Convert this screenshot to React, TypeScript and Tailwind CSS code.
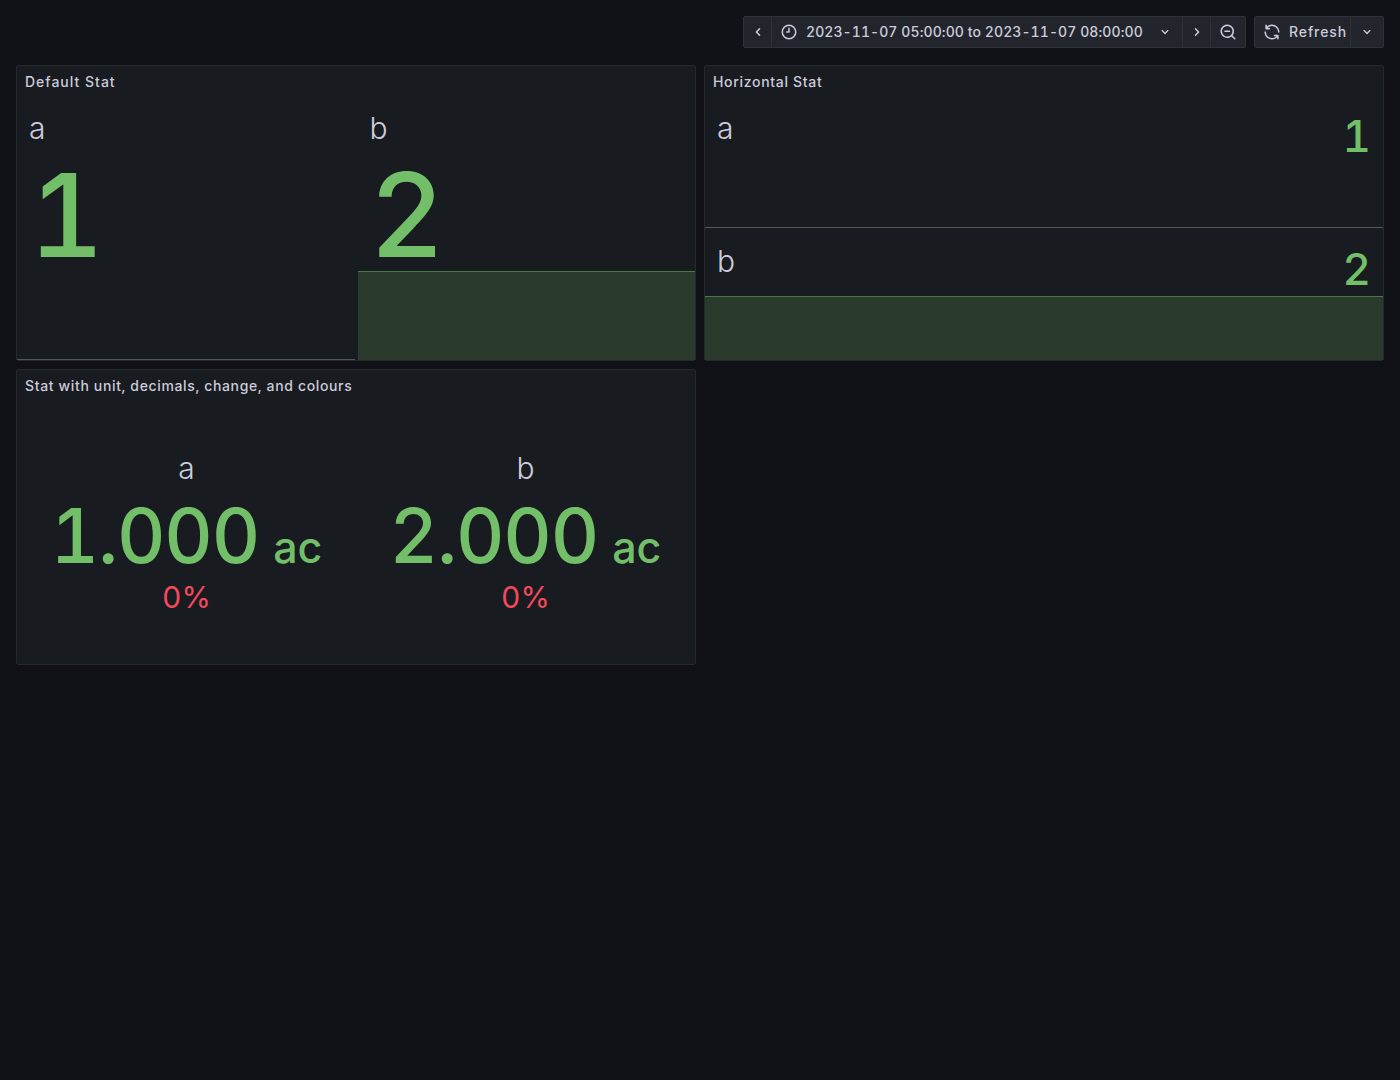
import React from "react"

const Panel: React.FC<{ title: string; titleClass: string; children: React.ReactNode }> = ({ title, titleClass, children }) => (
  <div className="flex h-[296px] flex-col rounded-[2px] border border-[#25282d] bg-[#181b1f]">
    <div className={`h-[32px] shrink-0 px-2 pt-[6px] text-sm leading-[20px] font-medium ${titleClass}`}>{title}</div>
    <div className="flex min-h-0 flex-1 flex-col">{children}</div>
  </div>
)

// flat sparkline: fill with a thin line on top
const Spark: React.FC<{ height: number }> = ({ height }) => (
  <svg className="absolute right-0 bottom-0 left-0 w-full" height={height} preserveAspectRatio="none" viewBox={`0 0 100 ${height}`}>
    <rect x="0" y="0" width="100" height={height} fill="#73bf69" fillOpacity="0.2" />
    <rect x="0" y="0" width="100" height="1" fill="#73bf69" fillOpacity="0.45" />
  </svg>
)

const Icon: React.FC<{ d: string; size?: number }> = ({ d, size = 16 }) => (
  <svg width={size} height={size} viewBox="0 0 24 24" fill="currentColor" className="shrink-0">
    <path d={d} />
  </svg>
)

const angleLeft = "M11.29,12l3.54-3.54a1,1,0,0,0,0-1.41,1,1,0,0,0-1.42,0L9.17,11.29a1,1,0,0,0,0,1.42L13.41,17a1,1,0,0,0,.71.29,1,1,0,0,0,.71-.29,1,1,0,0,0,0-1.41Z"
const angleRight = "M14.83,11.29,10.59,7.05a1,1,0,0,0-1.42,0,1,1,0,0,0,0,1.41L12.71,12,9.17,15.54a1,1,0,0,0,0,1.41,1,1,0,0,0,.71.29,1,1,0,0,0,.71-.29l4.24-4.24A1,1,0,0,0,14.83,11.29Z"
const angleDown = "M17,9.17a1,1,0,0,0-1.41,0L12,12.71,8.46,9.17a1,1,0,0,0-1.41,0,1,1,0,0,0,0,1.42l4.24,4.24a1,1,0,0,0,1.42,0L17,10.59A1,1,0,0,0,17,9.17Z"
const clock = "M12,2A10,10,0,1,0,22,12,10,10,0,0,0,12,2Zm0,18a8,8,0,1,1,8-8A8,8,0,0,1,12,20Zm0-14a1,1,0,0,0-1,1v4H9a1,1,0,0,0,0,2h3a1,1,0,0,0,1-1V7A1,1,0,0,0,12,6Z"
const searchMinus = "M21.71,20.29,18,16.61A9,9,0,1,0,16.61,18l3.68,3.68a1,1,0,0,0,1.42,0A1,1,0,0,0,21.71,20.29ZM11,18a7,7,0,1,1,7-7A7,7,0,0,1,11,18ZM14,10H8a1,1,0,0,0,0,2h6a1,1,0,0,0,0-2Z"
const sync = "M19.91,15.51H15.38a1,1,0,0,0,0,2h2.4A8,8,0,0,1,4,12a1,1,0,0,0-2,0,10,10,0,0,0,16.88,7.23V21a1,1,0,0,0,2,0V16.5A1,1,0,0,0,19.91,15.51ZM12,2A10,10,0,0,0,5.12,4.77V3a1,1,0,0,0-2,0V7.5a1,1,0,0,0,1,1h4.5a1,1,0,0,0,0-2H6.22A8,8,0,0,1,20,12a1,1,0,0,0,2,0A10,10,0,0,0,12,2Z"

function ToolButton({ children, className = "" }: { children: React.ReactNode; className?: string }) {
  return (
    <div className={`flex h-[32px] items-center justify-center border border-[#2f3136] bg-[#22252b] ${className}`}>
      {children}
    </div>
  )
}

const Stat: React.FC<{ label: string; value: string; spark: React.ReactNode }> = ({ label, value, spark }) => (
  <div className="relative flex-1 overflow-hidden px-3 pt-[10px]">
    {spark}
    <div className="relative text-[30px] leading-[40px] font-light text-[#ccccdc]">{label}</div>
    <div className="relative text-[116px] leading-[134px] font-medium text-[#73bf69]">{value}</div>
  </div>
)

const HStat: React.FC<{ label: string; value: string; spark: React.ReactNode; className: string }> = ({ label, value, spark, className }) => (
  <div className={`relative flex items-start justify-between overflow-hidden px-3 ${className}`}>
    {spark}
    <div className="relative text-[30px] leading-[40px] font-light">{label}</div>
    <div className="relative text-[44px] leading-[56px] font-medium text-[#73bf69]">{value}</div>
  </div>
)

const CenterStat: React.FC<{ label: string; value: string }> = ({ label, value }) => (
  <div className="flex flex-1 flex-col items-center pt-[46px]">
    <div className="text-[30px] leading-[40px] font-light">{label}</div>
    <div className="flex items-baseline text-[#73bf69]">
      <span className="text-[75px] leading-[95px] font-medium tracking-[-1.2px]">{value}</span>
      <span className="ml-[14px] text-[43px] font-medium">ac</span>
    </div>
    <div className="text-[30px] leading-[28px] text-[#f2495c]">0%</div>
  </div>
)

export default function App() {
  return (
    <div className="min-h-[1080px] bg-[#111217] px-4 pt-4 text-[#ccccdc] tabular-nums [font-family:Inter,sans-serif]">
      <div className="flex justify-end gap-2 pb-[17px]">
        <div className="flex text-sm font-medium tracking-[0.08px]">
          <ToolButton className="w-[29px] rounded-l-[2px]">
            <Icon d={angleLeft} size={18} />
          </ToolButton>
          <ToolButton className="-ml-px w-[412px] justify-start gap-2 pr-[9px] pl-2">
            <Icon d={clock} size={18} />
            <span className="flex-1 whitespace-nowrap">2023-11-07 05:00:00 to 2023-11-07 08:00:00</span>
            <Icon d={angleDown} />
          </ToolButton>
          <ToolButton className="-ml-px w-[29px]">
            <Icon d={angleRight} size={18} />
          </ToolButton>
          <ToolButton className="-ml-px w-[36px] rounded-r-[2px]">
            <Icon d={searchMinus} size={18} />
          </ToolButton>
        </div>
        <div className="flex text-sm font-medium tracking-[0.9px]">
          <ToolButton className="w-[97px] justify-start gap-2 rounded-l-[2px] pl-2">
            <Icon d={sync} size={18} />
            <span>Refresh</span>
          </ToolButton>
          <ToolButton className="-ml-px w-[34px] rounded-r-[2px]">
            <Icon d={angleDown} />
          </ToolButton>
        </div>
      </div>
      <div className="grid grid-cols-2 gap-2">
        <Panel title="Default Stat" titleClass="tracking-[1px]">
          <div className="flex flex-1 gap-[3px]">
            <Stat label="a" value="1" spark={<div className="absolute right-0 bottom-0 left-0 h-px bg-[#4f5a50]" />} />
            <Stat label="b" value="2" spark={<Spark height={89} />} />
          </div>
        </Panel>
        <Panel title="Horizontal Stat" titleClass="tracking-[0.68px]">
          <HStat className="h-[132px] pt-[10px]" label="a" value="1" spark={<div className="absolute right-0 bottom-0 left-0 h-px bg-[#4f5a50]" />} />
          <HStat className="h-[134px] pt-[13px]" label="b" value="2" spark={<Spark height={64} />} />
        </Panel>
        <Panel title="Stat with unit, decimals, change, and colours" titleClass="tracking-[0.64px]">
          <div className="flex flex-1">
            <CenterStat label="a" value="1.000" />
            <CenterStat label="b" value="2.000" />
          </div>
        </Panel>
      </div>
    </div>
  )
}
